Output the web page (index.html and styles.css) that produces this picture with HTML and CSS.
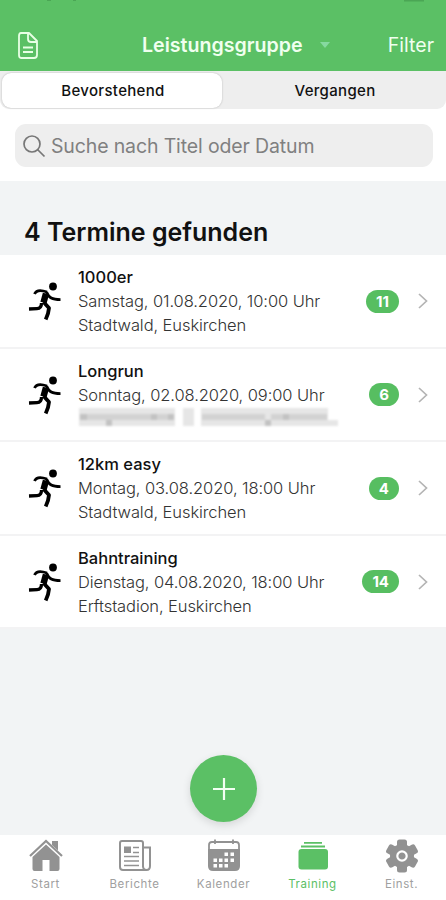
FILE: index.html
```html
<!DOCTYPE html>
<html lang="de">
<head>
    <meta charset="UTF-8">
    <meta name="viewport" content="width=device-width, initial-scale=1.0">
    <title>Leistungsgruppe - Training</title>
    <link rel="stylesheet" href="styles.css">
</head>
<body>

<svg width="0" height="0" class="defs">
    <symbol id="runner" viewBox="0 0 36 40">
        <circle cx="26" cy="5.500" r="3.900"/>
        <g fill="none" stroke="#000" stroke-linejoin="round">
            <path d="M7.500 13 C9 9.500 13 8.500 20 11" stroke-width="2.800"/>
            <path d="M19.500 11 C22 17 25 18.700 33.500 18.700" stroke-width="2.800"/>
            <path d="M19 12.500 L16.500 21.500" stroke-width="6.500"/>
            <path d="M16.500 21 L22 27 Q21.500 33 18.700 38.500" stroke-width="3.800"/>
            <path d="M14.500 22 Q14.500 27.500 10 27.700 L2 28" stroke-width="3.300"/>
        </g>
    </symbol>
    <symbol id="chevron" viewBox="0 0 10 16">
        <path d="M1 1 L8.500 8 L1 15" fill="none" stroke="#b4b4b4" stroke-width="1.700"/>
    </symbol>
</svg>

<header>
    <svg class="doc-icon" width="20" height="27" viewBox="0 0 20 27" fill="none" stroke="#e8ffe5" stroke-width="1.800" stroke-linejoin="round">
        <path d="M3 1 H11 L19 9 V23 Q19 26 16 26 H3 Q1 26 1 23 V4 Q1 1 3 1 Z M10 1 V7 Q10 10 13 10 H19 M5 15.500 H15 M5 20 H15"/>
    </svg>
    <h1>Leistungsgruppe</h1>
    <span class="caret"></span>
    <a class="filter">Filter</a>
    <svg class="status" width="446" height="2" viewBox="0 0 446 2" fill="#4ba655">
        <path d="M47 0h4v1h-4z M73 0h3v1h-3z M404 0h20v1.500h-20z"/>
    </svg>
</header>

<div class="segments">
    <div class="segment active">Bevorstehend</div>
    <div class="segment">Vergangen</div>
</div>

<div class="search">
    <div class="search-field">
        <svg width="24" height="24" viewBox="0 0 24 24" fill="none" stroke="#777" stroke-width="1.700">
            <circle cx="10" cy="10" r="8"/><path d="M15.500 15.500 L22.500 22.500"/>
        </svg>
        <span>Suche nach Titel oder Datum</span>
    </div>
</div>

<main>
    <h2>4 Termine gefunden</h2>

    <div class="event">
        <svg class="runner"><use href="#runner"/></svg>
        <div class="info">
            <h3>1000er</h3>
            <p>Samstag, 01.08.2020, 10:00 Uhr</p>
            <p>Stadtwald, Euskirchen</p>
        </div>
        <span class="badge">11</span>
        <svg class="chevron"><use href="#chevron"/></svg>
    </div>
    <div class="event">
        <svg class="runner"><use href="#runner"/></svg>
        <div class="info">
            <h3>Longrun</h3>
            <p>Sonntag, 02.08.2020, 09:00 Uhr</p>
            <svg class="masked" width="262" height="24" viewBox="0 0 262 24">
                <g fill="#e6e6e6">
                    <rect x="1" y="1" width="96" height="18"/><rect x="105" y="1" width="11" height="18"/>
                    <rect x="123" y="1" width="127" height="18"/><rect x="250" y="13" width="10" height="6"/>
                </g>
                <g fill="#d2d2d2">
                    <rect x="2" y="7" width="94" height="6"/><rect x="124" y="7" width="63" height="6"/>
                    <rect x="193" y="7" width="56" height="6"/>
                </g>
                <g fill="#c2c2c2">
                    <rect x="2" y="7" width="7" height="6"/><rect x="28" y="13" width="6" height="6"/>
                    <rect x="73" y="7" width="6" height="6"/><rect x="90" y="7" width="6" height="6"/>
                    <rect x="187" y="13" width="6" height="6"/><rect x="205" y="7" width="6" height="6"/>
                </g>
            </svg>
        </div>
        <span class="badge">6</span>
        <svg class="chevron"><use href="#chevron"/></svg>
    </div>
    <div class="event">
        <svg class="runner"><use href="#runner"/></svg>
        <div class="info">
            <h3>12km easy</h3>
            <p>Montag, 03.08.2020, 18:00 Uhr</p>
            <p>Stadtwald, Euskirchen</p>
        </div>
        <span class="badge">4</span>
        <svg class="chevron"><use href="#chevron"/></svg>
    </div>
    <div class="event">
        <svg class="runner"><use href="#runner"/></svg>
        <div class="info">
            <h3>Bahntraining</h3>
            <p>Dienstag, 04.08.2020, 18:00 Uhr</p>
            <p>Erftstadion, Euskirchen</p>
        </div>
        <span class="badge">14</span>
        <svg class="chevron"><use href="#chevron"/></svg>
    </div>

    <button class="add-btn" aria-label="Termin hinzufügen">
        <svg width="22" height="22" viewBox="0 0 22 22" stroke="#f2fff2" stroke-width="2.200"><path d="M11 0 V22 M0 11 H22"/></svg>
    </button>
</main>

<nav>
    <a class="tab">
        <svg width="36" height="34" viewBox="0 0 36 34">
            <path d="M2 17 L18 2 L34 17" fill="none" stroke="#929292" stroke-width="2.200"/>
            <path d="M24 2 H30 V11.500 L24 6 Z M18 5.500 L31.500 18 V30 Q31.500 32 29.500 32 H21.500 V21 H14.500 V32 H6.500 Q4.500 32 4.500 30 V18 Z"/>
        </svg>
        <span>Start</span>
    </a>
    <a class="tab">
        <svg width="34" height="34" viewBox="0 0 34 34" fill="none" stroke="#929292" stroke-width="2">
            <path d="M25 28 V4 Q25 2 23 2 H4 Q2 2 2 4 V28 Q2 31 5 31 H28.500 Q32 31 32 27 V8.500 H25 M25 27 Q25 31 28.500 31"/>
            <path d="M15 8.500 H21 M15 13.500 H21 M6 17.500 H21 M6 22 H21 M6 26.500 H21" stroke-width="1.600"/>
            <rect x="6" y="7.500" width="7" height="6.500" fill="#929292" stroke="none"/>
        </svg>
        <span>Berichte</span>
    </a>
    <a class="tab">
        <svg width="34" height="34" viewBox="0 0 34 34">
            <path d="M1 10 H33 V27 Q33 32 28 32 H6 Q1 32 1 27 Z"/>
            <path d="M2 11 V6 Q2 3 5 3 H29 Q32 3 32 6 V11 M8 0.500 V5 M26 0.500 V5" fill="none" stroke="#929292" stroke-width="1.800"/>
            <path d="M17.500 13.500h3.500v3.500h-3.500z M23.500 13.500h3.500v3.500h-3.500z M6.500 19.500h3.500v3.500H6.500z M12 19.500h3.500v3.500h-3.500z M17.500 19.500h3.500v3.500h-3.500z M23.500 19.500h3.500v3.500h-3.500z M6.500 25h3.500v3.500H6.500z M12 25h3.500v3.500h-3.500z M17.500 25h3.500v3.500h-3.500z" fill="#fff"/>
        </svg>
        <span>Kalender</span>
    </a>
    <a class="tab selected">
        <svg width="34" height="34" viewBox="0 0 34 34">
            <path d="M8 3 H26 V4.800 H8 Z M5 6.500 H29 V8.500 H5 Z"/><rect x="2.500" y="10" width="29.500" height="20.500" rx="3"/>
        </svg>
        <span>Training</span>
    </a>
    <a class="tab">
        <svg width="34" height="34" viewBox="-17 -17 34 34">
            <rect x="-5" y="-16.500" width="10" height="33" rx="2.500"/>
            <rect x="-5" y="-16.500" width="10" height="33" rx="2.500" transform="rotate(60)"/>
            <rect x="-5" y="-16.500" width="10" height="33" rx="2.500" transform="rotate(120)"/>
            <circle r="12"/><circle r="4.700" fill="none" stroke="#fff" stroke-width="2.200"/>
        </svg>
        <span>Einst.</span>
    </a>
</nav>

</body>
</html>
```

FILE: styles.css
```css
* {
    box-sizing: border-box;
}
body {
    font-family: Inter, "Liberation Sans", sans-serif;
    background-color: #fff;
    margin: 0;
    height: 900px;
    overflow: hidden;
    display: flex;
    flex-direction: column;
    color: #111;
}
h1, h2, h3, p {
    margin: 0;
    white-space: nowrap;
}
.defs {
    position: absolute;
}
header {
    height: 71px;
    flex: none;
    background: #5bc065;
    color: #f0ffef;
    display: flex;
    align-items: center;
    padding: 19px 12px 0 18px;
}
/* lower edge of the phone's status bar */
.status {
    position: absolute;
    top: 0;
    left: 0;
}
.doc-icon {
    margin-right: 104px;
}
header h1 {
    font-size: 19.600px;
    font-weight: 600;
    width: 161px;
}
.caret {
    margin-left: 17px;
    border: 5px solid transparent;
    border-top: 6px solid #86d9a0;
    border-bottom: 0;
}
.filter {
    margin-left: auto;
    font-size: 19.500px;
}
.segments {
    height: 38px;
    flex: none;
    display: flex;
    background: #eee;
    border-radius: 0 0 9px 9px;
    padding: 2px 0 1px 2px;
}
.segment {
    flex: 1;
    display: flex;
    align-items: center;
    justify-content: center;
    font-size: 15px;
    font-weight: 500;
    letter-spacing: 0.320px;
    padding-left: 2px;
}
.segment.active {
    flex: 0 0 220px;
    background: #fff;
    border-radius: 9px;
    box-shadow: 0 0 2px rgba(0, 0, 0, 0.25);
}
.search {
    height: 72px;
    flex: none;
    padding: 15px 13px 14px 15px;
}
.search-field {
    height: 43px;
    background: #eee;
    border-radius: 11px;
    display: flex;
    align-items: center;
    gap: 5px;
    padding-left: 7px;
    color: #808080;
    font-size: 19.500px;
    letter-spacing: -0.140px;
    white-space: nowrap;
}
main {
    flex: 1;
    background: #f2f4f5;
    position: relative;
}
main h2 {
    height: 74px;
    padding: 35px 0 0 24px;
    font-size: 25px;
    line-height: 32px;
    font-weight: 600;
}
.event {
    height: 93.500px;
    background: #fff;
    border-bottom: 2px solid #f3f3f4;
    display: flex;
    align-items: center;
    padding: 1px 18px 0 27px;
}
.runner {
    width: 36px;
    height: 40px;
    flex: none;
    margin-right: 15px;
}
.info {
    flex: 1;
    min-width: 0;
    height: 72px;
}
.info h3 {
    font-size: 16.500px;
    line-height: 24px;
    font-weight: 500;
}
.info p {
    font-size: 16.500px;
    line-height: 24px;
    font-weight: 300;
    letter-spacing: -0.090px;
    color: #333;
}
.masked {
    display: block;
    filter: blur(1px);
}
.badge {
    background: #57be61;
    color: #fff;
    font-size: 15px;
    font-weight: 700;
    line-height: 23px;
    border-radius: 12px;
    padding: 0 10px;
    margin-right: 19px;
}
.chevron {
    width: 10px;
    height: 16px;
}
.add-btn {
    position: absolute;
    left: 190px;
    bottom: 13px;
    width: 67px;
    height: 67px;
    border: none;
    border-radius: 50%;
    background: #5bc065;
    box-shadow: 0 3px 9px rgba(0, 0, 0, 0.12);
    display: flex;
    align-items: center;
    justify-content: center;
}
nav {
    height: 65px;
    flex: none;
    display: flex;
    background: #fff;
    padding-left: 1px;
}
.tab {
    flex: 1;
    display: flex;
    flex-direction: column;
    align-items: center;
    padding-top: 4px;
    gap: 4px;
    font-size: 11.500px;
    line-height: 14px;
    letter-spacing: 0.6px;
    color: #a0a0a0;
    fill: #929292;
}
.tab.selected {
    color: #5bc065;
    fill: #5bc065;
}
```
